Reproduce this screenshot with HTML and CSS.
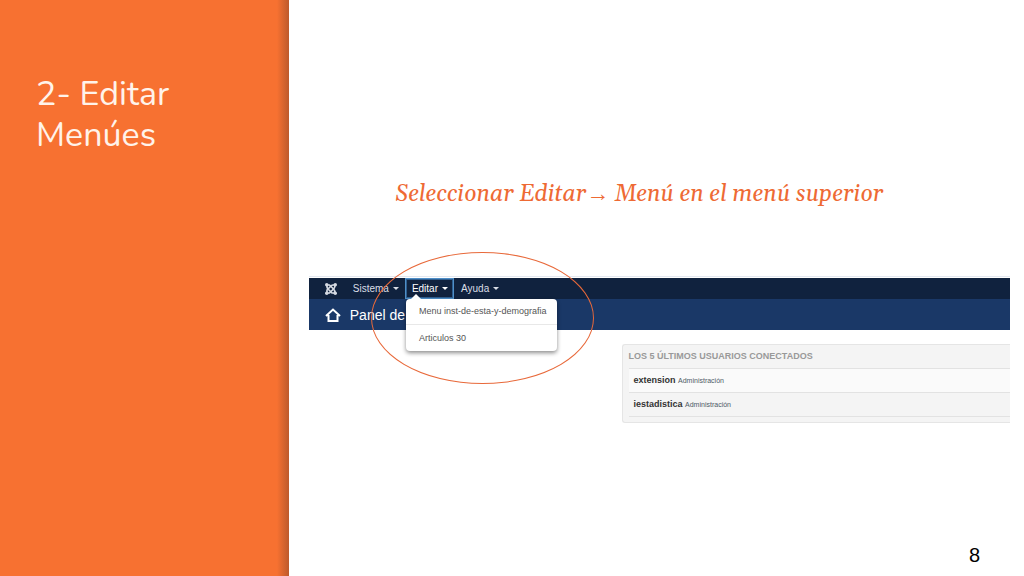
FILE: index.html
```html
<!DOCTYPE html>
<html lang="es">
<head>
  <meta charset="UTF-8">
  <meta name="viewport" content="width=device-width, initial-scale=1.0">
  <title>2- Editar Menúes</title>
  <link rel="stylesheet" href="styles.css">
</head>
<body>
  <div class="slide">
    <aside class="sidebar">
      <h1>2- Editar Menúes</h1>
    </aside>
    <main class="content">
      <h2 class="instruction">Seleccionar Editar<span class="arrow">→</span> Menú en el menú superior</h2>

      <div class="admin">
        <nav class="navbar">
          <a href="#" class="brand" aria-label="Joomla">
            <svg viewBox="0 0 24 24" width="12" height="12" fill="none" stroke="#d5dae2" stroke-width="3.4" stroke-linejoin="round">
              <path d="M4 4v4q0 2 2 4l8 8h6"/>
              <path d="M20 4h-4q-2 0-4 2l-8 8v6"/>
              <path d="M4 4h5l8 8q3 3 3 8"/>
              <path d="M4 20h5l9-9q2-2 2-7"/>
              <g fill="#d5dae2" stroke="none">
                <circle cx="3.5" cy="3.5" r="3.5"/>
                <circle cx="20.5" cy="3.5" r="3.5"/>
                <circle cx="3.5" cy="20.5" r="3.5"/>
                <circle cx="20.5" cy="20.5" r="3.5"/>
              </g>
            </svg>
          </a>
          <button class="menu-button">Sistema <span class="caret"></span></button>
          <div class="menu">
            <button class="menu-button active">Editar <span class="caret"></span></button>
            <div class="dropdown">
              <a href="#">Menu inst-de-esta-y-demografia</a>
              <a href="#">Articulos 30</a>
            </div>
          </div>
          <button class="menu-button">Ayuda <span class="caret"></span></button>
        </nav>
        <header class="header">
          <svg viewBox="0 0 16 14" width="16" height="14" fill="none" stroke="#fff" stroke-width="2">
            <path d="M1 8l7-6.5L15 8M3.500 7v6h9V7"/>
          </svg>
          <h3>Panel de</h3>
        </header>
        <section class="panel">
          <h4>LOS 5 ÚLTIMOS USUARIOS CONECTADOS</h4>
          <div class="user"><strong>extension</strong> <small>Administración</small></div>
          <div class="user"><strong>iestadistica</strong> <small>Administración</small></div>
        </section>
        <div class="highlight"></div>
      </div>

      <footer class="page-number">8</footer>
    </main>
  </div>
</body>
</html>
```
FILE: styles.css
```css
* {
  box-sizing: border-box;
}

body {
  margin: 0;
  background-color: #fff;
  font-family: "Liberation Sans", Arial, sans-serif;
}

.slide {
  display: flex;
  min-height: 100vh;
}

.sidebar {
  flex: 0 0 28.2%;
  padding: 74px 36px;
  background: linear-gradient(to left, #bd5a2c, #f77131 12px);
}

h1 {
  margin: 0;
  color: #fff3ea;
  font-family: Nunito, Lato, sans-serif;
  font-size: 34px;
  font-weight: 400;
  line-height: 41px;
}

.content {
  flex: 1;
  display: flex;
  flex-direction: column;
  padding: 177px 14px 8px 20px;
}

.instruction {
  margin: 0 40px 64px 0;
  color: #ee6a34;
  font-family: Georgia, Gelasio, "Liberation Serif", serif;
  font-size: 23px;
  font-style: italic;
  font-weight: 400;
  line-height: 34px;
  text-align: center;
}

.arrow {
  font-family: "Liberation Serif", serif;
}

.admin {
  position: relative;
  border-top: 1px solid #e3e8f0;
  padding-top: 1px;
}

.navbar {
  display: flex;
  height: 21px;
  padding-left: 16px;
  background-color: #10223e;
}

.brand {
  display: flex;
  align-items: center;
  margin-right: 9px;
}

.menu {
  position: relative;
}

.menu-button {
  display: flex;
  align-items: center;
  gap: 4px;
  height: 100%;
  padding: 0 5px 0 6px;
  border: 1px solid transparent;
  background: none;
  color: #d9dee6;
  font-family: inherit;
  font-size: 10px;
}

.menu-button.active {
  border-color: #4f8fc8;
  box-shadow: inset 0 0 0 1px #2f5f90;
  color: #fff;
}

.caret {
  border: 3px solid transparent;
  border-top-color: currentColor;
  border-bottom: 0;
}

.dropdown {
  position: absolute;
  top: 100%;
  left: 1px;
  z-index: 1;
  width: 151px;
  border-radius: 4px;
  background-color: #fff;
  box-shadow: 0 2px 4px rgba(0, 0, 0, 0.45);
}

.dropdown::before {
  content: "";
  position: absolute;
  top: -5px;
  left: 5px;
  border: 5px solid transparent;
  border-top: 0;
  border-bottom-color: #fff;
}

.dropdown a {
  display: block;
  padding: 0 13px;
  color: #555;
  font-size: 9px;
  line-height: 25px;
  text-decoration: none;
  white-space: nowrap;
}

.dropdown a + a {
  padding-top: 1px;
  border-top: 1px solid #e8e8e8;
}

.header {
  display: flex;
  align-items: center;
  gap: 9px;
  height: 31px;
  padding-left: 16px;
  background-color: #1a3867;
}

h3 {
  margin: 0;
  color: #fff;
  font-size: 14px;
  font-weight: 400;
}

.panel {
  margin: 14px 0 0 44.6%;
  padding: 0 0 5px 6px;
  border: 1px solid #e5e5e5;
  border-right: 0;
  border-radius: 3px 0 0 3px;
  background-color: #f4f4f4;
}

h4 {
  margin: 0;
  color: #999;
  font-size: 9px;
  line-height: 23px;
}

.user {
  padding-left: 5px;
  border-top: 1px solid #e2e2e2;
  background-color: #fafafa;
  color: #333;
  font-size: 9px;
  line-height: 23px;
}

.user:last-child {
  border-bottom: 1px solid #e2e2e2;
  background-color: #f4f4f4;
}

.user small {
  color: #4d5a66;
  font-size: 7px;
}

.highlight {
  position: absolute;
  top: -25px;
  left: 62px;
  z-index: 2;
  width: 223px;
  height: 132px;
  border: 1px solid #e8693a;
  border-radius: 50%;
  pointer-events: none;
}

.page-number {
  margin-top: auto;
  padding-right: 30px;
  color: #000;
  font-size: 20px;
  line-height: 26px;
  text-align: right;
}
```
